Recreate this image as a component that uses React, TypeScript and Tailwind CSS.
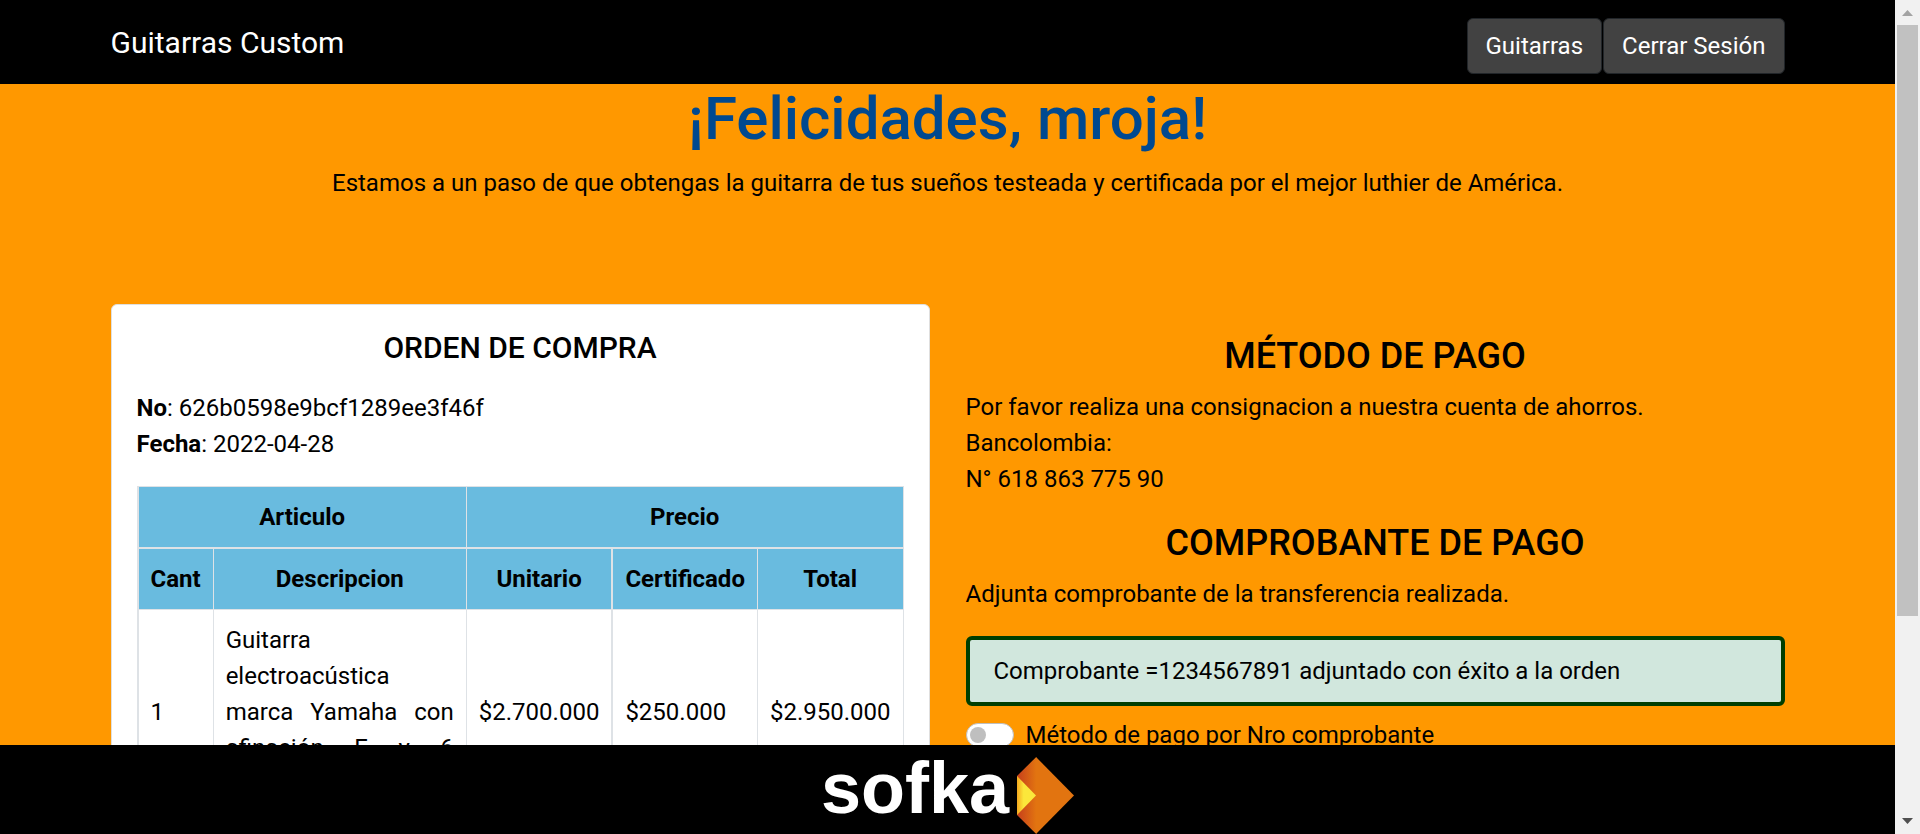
import React from "react";

const headCell = "border border-[#dee2e6] p-3 text-center font-bold";
const bodyCell = "border border-[#dee2e6] p-3";

function SofkaLogo() {
  return (
    <div className="flex items-end gap-2">
      <span className="font-['Liberation_Sans',Arial,sans-serif] text-[72px] leading-[92px] font-bold text-white">sofka</span>
      <svg className="h-[77px] w-[57px]" viewBox="0 0 57 77" aria-hidden="true">
        <defs>
          <linearGradient id="fold" x1="0" x2="1" y1="0" y2="0">
            <stop offset="0" stopColor="#c63f1c" />
            <stop offset="1" stopColor="#e27410" />
          </linearGradient>
          <linearGradient id="core" x1="0" x2="1" y1="0" y2="0">
            <stop offset="0" stopColor="#f5a81f" />
            <stop offset="0.35" stopColor="#fbe73b" />
            <stop offset="1" stopColor="#fbe73b" />
          </linearGradient>
        </defs>
        <path d="M19 0 57 38.500 19 77Z" fill="#e27410" />
        <path d="M0 19 19.200 0V77L0 58Z" fill="url(#fold)" />
        <path d="M0 19 19 38.500 0 58Z" fill="url(#core)" />
      </svg>
    </div>
  );
}

function Header() {
  return (
    <header className="h-[84px] shrink-0 bg-black pt-[18px]">
      <nav className="mx-auto flex max-w-[1710px] items-start justify-between px-[18px]">
        <a href="#" className="text-[30px] leading-[50px] text-white">Guitarras Custom</a>
        <div className="flex gap-px">
          <button type="button" className="rounded-md border border-[#212529] bg-[#424242] px-[18px] py-[9px] text-white">Guitarras</button>
          <button type="button" className="rounded-md border border-[#212529] bg-[#424242] px-[18px] py-[9px] text-white">Cerrar Sesión</button>
        </div>
      </nav>
    </header>
  );
}

function Order() {
  return (
    <section className="rounded-md border border-[#dfdfdf] bg-white px-[25px] py-[25px]">
      <h2 className="text-center text-[30px] leading-9 font-medium">ORDEN DE COMPRA</h2>
      <p className="mt-6">
        <b>No</b>: 626b0598e9bcf1289ee3f46f
        <br />
        <b>Fecha</b>: 2022-04-28
      </p>
      <table className="mt-6 w-full border-collapse border-l-2 border-[#dee2e6]">
        <colgroup>
          <col />
          <col />
          <col className="border-r-2 border-[#dee2e6]" />
          <col />
          <col />
        </colgroup>
        <thead className="bg-[#69bbdf]">
          <tr>
            <th colSpan={2} className={headCell}>Articulo</th>
            <th colSpan={3} className={headCell}>Precio</th>
          </tr>
          <tr className="border-t-2 border-[#dee2e6]">
            <th className={headCell}>Cant</th>
            <th className={headCell}>Descripcion</th>
            <th className={headCell}>Unitario</th>
            <th className={headCell}>Certificado</th>
            <th className={headCell}>Total</th>
          </tr>
        </thead>
        <tbody>
          <tr>
            <td className={bodyCell}>1</td>
            <td className="border border-[#dee2e6] p-3 text-justify">Guitarra electroacústica marca Yamaha con afinación E y 6 cuerdas</td>
            <td className={bodyCell}>$2.700.000</td>
            <td className={bodyCell}>$250.000</td>
            <td className={bodyCell}>$2.950.000</td>
          </tr>
        </tbody>
      </table>
    </section>
  );
}

function Payment() {
  return (
    <section className="pt-[31px]">
      <h2 className="text-center text-[36px] leading-[43px] font-medium">MÉTODO DE PAGO</h2>
      <p className="mt-[11px]">
        Por favor realiza una consignacion a nuestra cuenta de ahorros.
        <br />
        Bancolombia:
        <br />
        N° 618 863 775 90
      </p>
      <h2 className="mt-[25px] text-center text-[36px] leading-[43px] font-medium">COMPROBANTE DE PAGO</h2>
      <p className="mt-[11px]">Adjunta comprobante de la transferencia realizada.</p>
      <div role="status" className="mt-6 rounded-md border-4 border-[#003e00] bg-[#d1e7dd] px-6 py-[13px]">
        Comprobante =1234567891 adjuntado con éxito a la orden
      </div>
      <div className="mt-[11px] flex items-center gap-3">
        <input
          id="nro"
          type="checkbox"
          role="switch"
          className="h-6 w-12 appearance-none rounded-full border border-[#bfbfbf] bg-white p-[3px] before:block before:size-4 before:rounded-full before:bg-[#bfbfbf] checked:before:ml-6"
        />
        <label htmlFor="nro">Método de pago por Nro comprobante</label>
      </div>
    </section>
  );
}

function ScrollRail() {
  return (
    <div aria-hidden="true" className="flex w-[25px] shrink-0 flex-col items-center bg-[#f1f1f1]">
      <svg className="h-[25px] w-[25px] shrink-0" viewBox="0 0 25 25"><path d="M7 16h11l-5.500-6z" fill="#a3a3a3" /></svg>
      <div className="min-h-0 w-[21px] flex-[591] bg-[#c1c1c1]" />
      <div className="min-h-0 flex-[193]" />
      <svg className="h-[25px] w-[25px] shrink-0" viewBox="0 0 25 25"><path d="M7 9h11l-5.500 6z" fill="#505050" /></svg>
    </div>
  );
}

export default function App() {
  return (
    <div className="flex h-screen font-[Roboto,sans-serif] text-[24px] leading-9 text-black">
      <div className="flex min-w-0 flex-1 flex-col bg-[#ff9800]">
        <Header />
        <main className="min-h-0 flex-1 overflow-y-auto [scrollbar-width:none]">
          <div className="mx-auto max-w-[1710px] px-[18px] pb-12">
            <h1 className="text-center text-[60px] leading-[70px] font-medium text-[#004990]">¡Felicidades, mroja!</h1>
            <p className="mt-[11px] text-center">
              Estamos a un paso de que obtengas la guitarra de tus sueños testeada y certificada por el mejor luthier de América.
            </p>
            <div className="mt-[103px] grid grid-cols-2 items-start gap-9">
              <Order />
              <Payment />
            </div>
          </div>
        </main>
        <footer className="flex h-[89px] shrink-0 items-end justify-center bg-black">
          <SofkaLogo />
        </footer>
      </div>
      <ScrollRail />
    </div>
  );
}
